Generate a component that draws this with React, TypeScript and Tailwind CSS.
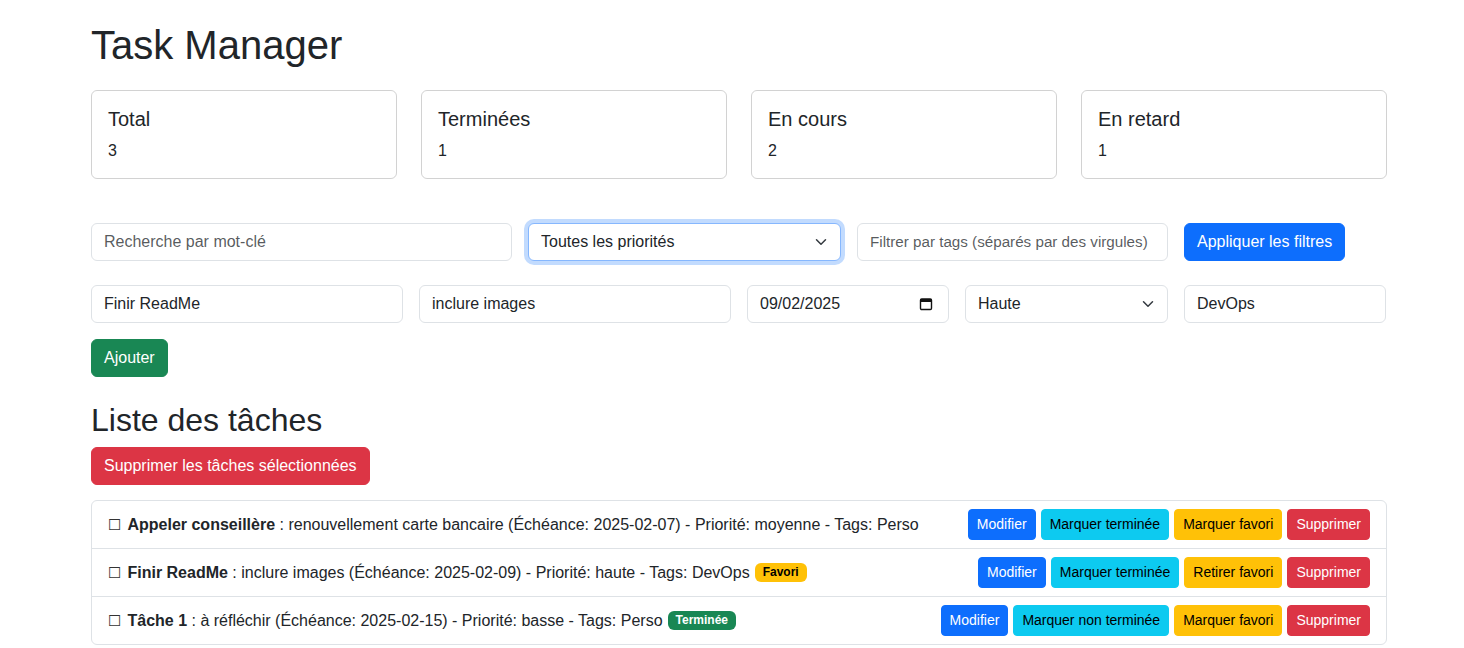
import React from 'react';

const INPUT =
  'h-[38px] w-full rounded-[6px] border border-[#dee2e6] bg-white px-3 text-base text-[#212529] outline-none placeholder:text-[rgba(33,37,41,0.75)]';

const BTN = {
  primary: 'bg-[#0d6efd] border-[#0d6efd] text-white',
  info: 'bg-[#0dcaf0] border-[#0dcaf0] text-black',
  warning: 'bg-[#ffc107] border-[#ffc107] text-black',
  danger: 'bg-[#dc3545] border-[#dc3545] text-white',
  success: 'bg-[#198754] border-[#198754] text-white',
};

type Task = {
  title: string;
  desc: string;
  due: string;
  priority: string;
  tags: string;
  favorite: boolean;
  done: boolean;
};

const tasks: Task[] = [
  {
    title: 'Appeler conseillère',
    desc: 'renouvellement carte bancaire',
    due: '2025-02-07',
    priority: 'moyenne',
    tags: 'Perso',
    favorite: false,
    done: false,
  },
  {
    title: 'Finir ReadMe',
    desc: 'inclure images',
    due: '2025-02-09',
    priority: 'haute',
    tags: 'DevOps',
    favorite: true,
    done: false,
  },
  {
    title: 'Tâche 1',
    desc: 'à réfléchir',
    due: '2025-02-15',
    priority: 'basse',
    tags: 'Perso',
    favorite: false,
    done: true,
  },
];

const stats = [
  { label: 'Total', value: 3 },
  { label: 'Terminées', value: 1 },
  { label: 'En cours', value: 2 },
  { label: 'En retard', value: 1 },
];

function Chevron() {
  return (
    <svg
      className="pointer-events-none absolute right-3 top-1/2 h-3 w-4 -translate-y-1/2"
      viewBox="0 0 16 16"
      fill="none"
      stroke="#343a40"
      strokeWidth="2"
      strokeLinecap="round"
      strokeLinejoin="round"
    >
      <path d="m2 5 6 6 6-6" />
    </svg>
  );
}

function SelectBox({ value, focused }: { value: string; focused?: boolean }) {
  return (
    <div className="relative w-full">
      <select
        defaultValue={value}
        className={
          'h-[38px] w-full appearance-none rounded-[6px] border bg-white pl-3 pr-9 text-base text-[#212529] outline-none ' +
          (focused
            ? 'border-[#86b7fe] shadow-[0_0_0_4px_rgba(13,110,253,0.25)]'
            : 'border-[#dee2e6]')
        }
      >
        <option>{value}</option>
      </select>
      <Chevron />
    </div>
  );
}

export default function App() {
  return (
    <div className="min-h-screen bg-white font-['Liberation_Sans',Arial,sans-serif] text-base leading-6 text-[#212529]">
      <main className="ml-[91px] w-[1296px] pt-[21px]">
        <h1 className="text-[40px] font-medium leading-[48px]">Task Manager</h1>

        {/* stats */}
        <div className="mt-[21px] grid grid-cols-4 gap-6">
          {stats.map((s) => (
            <div
              key={s.label}
              className="rounded-[6px] border border-[rgba(0,0,0,0.175)] px-4 pb-[15px] pt-4"
            >
              <h5 className="mb-2 text-[20px] font-medium leading-6">{s.label}</h5>
              <p className="leading-6">{s.value}</p>
            </div>
          ))}
        </div>

        {/* filters */}
        <div className="mt-[44px] flex gap-4">
          <div className="w-[421px]">
            <input className={INPUT} placeholder="Recherche par mot-clé" />
          </div>
          <div className="w-[313px]">
            <SelectBox value="Toutes les priorités" focused />
          </div>
          <div className="w-[311px]">
            <input
              className={INPUT + ' placeholder:text-[15.2px]'}
              placeholder="Filtrer par tags (séparés par des virgules)"
            />
          </div>
          <div>
            <button className={'h-[38px] rounded-[6px] border px-3 ' + BTN.primary}>
              Appliquer les filtres
            </button>
          </div>
        </div>

        {/* new task */}
        <div className="mt-6 flex gap-4">
          <div className="w-[312px]">
            <input className={INPUT} defaultValue="Finir ReadMe" />
          </div>
          <div className="w-[312px]">
            <input className={INPUT} defaultValue="inclure images" />
          </div>
          <div className="w-[202px]">
            <div className={INPUT + ' flex items-center justify-between pr-[15px]'}>
              <span>09/02/2025</span>
              <svg viewBox="0 0 14 14" className="h-[14px] w-[14px]" fill="none">
                <rect x="1.5" y="2" width="11" height="10.5" rx="1.2" stroke="#111" strokeWidth="1.4" />
                <rect x="1.5" y="2" width="11" height="3" fill="#111" />
              </svg>
            </div>
          </div>
          <div className="w-[203px]">
            <SelectBox value="Haute" />
          </div>
          <div className="w-[202px]">
            <input className={INPUT} defaultValue="DevOps" />
          </div>
        </div>
        <div className="mt-4">
          <button className={'h-[38px] rounded-[6px] border px-3 ' + BTN.success}>Ajouter</button>
        </div>

        {/* list */}
        <h2 className="mb-2 mt-6 text-[32px] font-medium leading-[38.4px]">Liste des tâches</h2>
        <button className={'h-[38px] rounded-[6px] border px-3 ' + BTN.danger}>
          Supprimer les tâches sélectionnées
        </button>

        <ul className="mt-[15px] rounded-[6px] border border-[#dee2e6]">
          {tasks.map((t, i) => (
            <li
              key={t.title}
              className={
                'flex items-center justify-between px-4 py-2 ' +
                (i > 0 ? 'border-t border-[#dee2e6]' : '')
              }
            >
              <div className="flex items-center whitespace-nowrap">
                <span className="mr-[6px] font-['DejaVu_Sans',sans-serif] text-[15px] text-[#333]">☐</span>
                <span>
                  <strong className="font-bold">{t.title}</strong> : {t.desc} (Échéance: {t.due}) -
                  Priorité: {t.priority} - Tags: {t.tags}
                </span>
                {t.favorite && (
                  <span className="ml-[5px] rounded-[6px] bg-[#ffc107] px-[8px] py-[4px] text-[12px] font-bold leading-[11px] text-black">
                    Favori
                  </span>
                )}
                {t.done && (
                  <span className="ml-[5px] rounded-[6px] bg-[#198754] px-[8px] py-[4px] text-[12px] font-bold leading-[11px] text-white">
                    Terminée
                  </span>
                )}
              </div>
              <div className="flex gap-[5px]">
                <SmallBtn kind="primary">Modifier</SmallBtn>
                <SmallBtn kind="info">{t.done ? 'Marquer non terminée' : 'Marquer terminée'}</SmallBtn>
                <SmallBtn kind="warning">{t.favorite ? 'Retirer favori' : 'Marquer favori'}</SmallBtn>
                <SmallBtn kind="danger">Supprimer</SmallBtn>
              </div>
            </li>
          ))}
        </ul>
      </main>
    </div>
  );
}

/* helpers */
function SmallBtn({ kind, children }: { kind: keyof typeof BTN; children: React.ReactNode }) {
  return (
    <button className={'h-[31px] rounded-[4px] border px-2 text-sm leading-[21px] ' + BTN[kind]}>
      {children}
    </button>
  );
}
